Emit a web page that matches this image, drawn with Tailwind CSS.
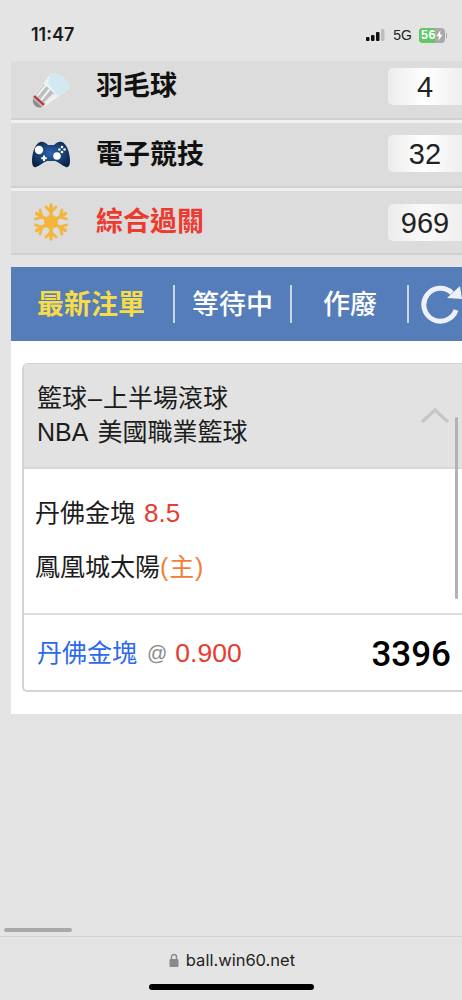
<!doctype html>
<html lang="zh-Hant"><head><meta charset="utf-8">
<script src="https://cdn.jsdelivr.net/npm/@tailwindcss/browser@4"></script>
</head>
<body class="m-0 bg-[#e4e4e4]">
<div class="relative w-[462px] h-[1000px] overflow-hidden flex flex-col bg-[#e4e4e4] text-black font-['Liberation_Sans','Noto_Sans_CJK_TC',sans-serif]">
  <!-- status bar -->
  <div class="h-[61px] shrink-0 flex items-start pt-[24px] pl-[31px] pr-[15px]">
    <span class="text-[18px] leading-[22px] font-semibold text-[#1a1a1a] font-['Inter','Liberation_Sans',sans-serif]">11:47</span>
    <div class="ml-auto flex items-center h-[20px] mt-px">
      <svg width="20" height="14" viewBox="0 0 20 14"><rect x="0" y="9" width="3.5" height="4" rx="1" fill="#111"/><rect x="5" y="7" width="3.5" height="6" rx="1" fill="#111"/><rect x="10" y="4" width="3.5" height="9" rx="1" fill="#111"/><rect x="15" y="1" width="3.5" height="12" rx="1" fill="#bdbdbd"/></svg>
      <span class="ml-[7px] text-[14px] leading-[20px] text-[#222]">5G</span>
      <div class="ml-[7px] relative w-[26px] h-[15px] rounded-[4px] overflow-hidden bg-[#a9a9a9]">
        <div class="absolute left-0 top-0 bottom-0 w-[16px] bg-[#62c866]"></div>
        <span class="absolute left-[2px] top-0 text-[12.5px] leading-[15px] font-bold text-white tracking-[0.5px]">56</span>
        <svg class="absolute right-[2px] top-[2px]" width="7" height="11" viewBox="0 0 7 11"><path d="M4.5 0 0.5 6.2H3L2.3 11 6.5 4.6H4Z" fill="#fff"/></svg>
      </div>
      <div class="w-[1px] h-[5px] bg-[#aaa] ml-px"></div>
    </div>
  </div>

  <div class="ml-[11px] flex flex-col">
    <!-- sport rows -->
    <div class="h-[59px] flex items-center bg-[#dcdcdc] border-b-2 border-[#d0d0d0]">
      <div class="w-[85px] flex justify-start pl-[20px] shrink-0">
        <svg width="40" height="38" viewBox="0 0 40 38">
          <path d="M3 25 20 2C28 1 36 8 39 17L13 36Z" fill="#eaf3f7"/>
          <path d="M20 2C28 1 36 8 39 17L27 25 17 12Z" fill="#d3e8f0"/>
          <path d="M2 27 13 13 24 23 11 36C6 37 1 33 2 27Z" fill="#bdbdbd"/>
          <path d="M6 25 15 14M10 29 19 18M14 32 23 23" stroke="#f0f0f0" stroke-width="2"/>
          <path d="M3 25 13 34" stroke="#b8343a" stroke-width="2.2"/>
          <path d="M2 28 11 36C6 38 1 34 2 28Z" fill="#8c8c8c"/>
        </svg>
      </div>
      <span class="text-[27px] leading-[34px] font-bold text-[#111] -mt-[8px]">羽毛球</span>
      <div class="ml-auto w-[74px] h-[37px] -mt-[6px] rounded-l-[5px] bg-gradient-to-r from-[#ececec] via-white to-[#eeeeee] text-center text-[29px] leading-[38px] text-[#222]">4</div>
    </div>
    <div class="h-[3px] bg-[#f0f0f0]"></div>
    <div class="h-[65px] flex items-center bg-[#dcdcdc] border-b-2 border-[#d0d0d0]">
      <div class="w-[85px] flex pl-[20px] shrink-0">
        <svg width="40" height="27" viewBox="0 0 40 27">
          <defs><radialGradient id="pad" cx="50%" cy="45%" r="60%"><stop offset="0" stop-color="#2c67b4"/><stop offset="1" stop-color="#0b2344"/></radialGradient></defs>
          <path d="M9 1C12 0 15 2 17 4H23C25 2 28 0 31 1 36 3 39 12 39 20 39 25 37 27 35 26 31 25 28 21 24 20H16C12 21 9 25 5 26 3 27 1 25 1 20 1 12 4 3 9 1Z" fill="url(#pad)"/>
          <circle cx="8" cy="9" r="4.2" fill="#fff"/><circle cx="26" cy="15" r="3.8" fill="#fff"/>
          <path d="M13 14.5V20M10.2 17.2H15.8" stroke="#fff" stroke-width="2"/>
          <circle cx="31" cy="6" r="1.3" fill="#fff"/><circle cx="31" cy="11" r="1.3" fill="#fff"/><circle cx="28.4" cy="8.5" r="1.3" fill="#fff"/><circle cx="33.6" cy="8.5" r="1.3" fill="#fff"/>
        </svg>
      </div>
      <span class="text-[27px] leading-[34px] font-bold text-[#111]">電子競技</span>
      <div class="ml-auto w-[74px] h-[37px] -mt-[2px] rounded-l-[5px] bg-gradient-to-r from-[#ececec] via-white to-[#eeeeee] text-center text-[29px] leading-[38px] text-[#222]">32</div>
    </div>
    <div class="h-[3px] bg-[#f0f0f0]"></div>
    <div class="h-[64px] flex items-center bg-[#dcdcdc] border-b-2 border-[#d0d0d0]">
      <div class="w-[85px] flex pl-[22px] shrink-0">
        <svg width="36" height="38" viewBox="0 0 36 38" fill="none" stroke="#f3b53c" stroke-width="3.4" stroke-linecap="round">
          <path d="M18 2V36M3.5 10.5 32.5 27.5M32.5 10.5 3.5 27.5"/>
          <path d="M13 4 18 9 23 4M13 34 18 29 23 34M2.5 16 9 14 7 7M33.5 16 27 14 29 7M2.5 22 9 24 7 31M33.5 22 27 24 29 31" stroke-width="2.8"/>
          <circle cx="18" cy="19" r="5" stroke-width="4"/>
        </svg>
      </div>
      <span class="text-[27px] leading-[34px] font-bold text-[#ec3a2f]">綜合過關</span>
      <div class="ml-auto w-[74px] h-[37px] rounded-l-[5px] bg-gradient-to-r from-[#ececec] via-[#fafafa] to-[#eeeeee] text-center text-[29px] leading-[38px] text-[#222]">969</div>
    </div>

    <!-- tabs -->
    <div class="mt-[12px] h-[74px] bg-[#547db9] flex items-center text-[27px] leading-[34px] overflow-hidden whitespace-nowrap">
      <span class="ml-[26px] mt-[2px] shrink-0 font-bold text-[#f6dc4a]">最新注單</span>
      <div class="ml-[28px] shrink-0 w-[2px] h-[38px] bg-[#c9d3e2]"></div>
      <span class="ml-[17px] mt-[2px] shrink-0 font-medium text-white">等待中</span>
      <div class="ml-[17px] shrink-0 w-[2px] h-[38px] bg-[#c9d3e2]"></div>
      <span class="ml-[31px] mt-[2px] shrink-0 font-medium text-white">作廢</span>
      <div class="ml-[30px] shrink-0 w-[2px] h-[38px] bg-[#c9d3e2]"></div>
      <svg class="ml-[11px] shrink-0" width="44" height="42" viewBox="0 0 44 42" fill="none">
        <path d="M32 10A16.5 16.5 0 1 0 36 27" stroke="#eef2f8" stroke-width="5"/>
        <path d="M27 15 42 16 40 3Z" fill="#eef2f8"/>
      </svg>
    </div>

    <!-- panel -->
    <div class="h-[373px] bg-white pt-[22px] pl-[11px]">
      <div class="h-[329px] rounded-tl-[6px] rounded-bl-[5px] border-l-2 border-b-2 border-t border-[#d4d4d4] flex flex-col bg-white overflow-hidden">
        <div class="h-[105px] shrink-0 bg-[#e2e2e2] border-b-2 border-[#d9d9d9] pt-[17px] pl-[13px] text-[25px] leading-[34px] text-[#1c1c1c] relative">
          <div>籃球<span class="inline-block w-[16px] text-center">–</span>上半場滾球</div>
          <div>NBA<span class="inline-block w-[9px]"></span>美國職業籃球</div>
          <svg class="absolute left-[396px] top-[43px]" width="30" height="18" viewBox="0 0 30 18" fill="none"><path d="M2 15 15 3 28 15" stroke="#c6c6c6" stroke-width="3.2"/></svg>
        </div>
        <div class="h-[146px] shrink-0 border-b-2 border-[#dddddd] pl-[11px] pt-[27px] text-[25px] leading-[34px] text-[#1c1c1c]">
          <div>丹佛金塊 <span class="text-[#e83b2e] text-[26px] ml-[2px]">8.5</span></div>
          <div class="mt-[20px]">鳳凰城太陽<span class="text-[#f07f33] tracking-[0.8px]">(主)</span></div>
        </div>
        <div class="flex-1 flex items-center pl-[13px] pr-[11px] pt-[4px]">
          <span class="text-[25px] leading-[34px] text-[#2c68ee] -mt-[4px]">丹佛金塊</span>
          <span class="ml-[10px] -mt-[4px] text-[20px] text-[#8a8a8a]">@</span>
          <span class="ml-[8px] -mt-[4px] text-[26.5px] leading-[34px] text-[#e83b2e]">0.900</span>
          <span class="ml-auto text-[35px] leading-[40px] font-medium font-['Roboto','Liberation_Sans',sans-serif]">3396</span>
        </div>
      </div>
    </div>
  </div>

  <!-- vertical scroll indicator -->
  <div class="absolute left-[455px] top-[417px] w-[3px] h-[182px] rounded-full bg-[#b2b2b2]"></div>

  <!-- browser bottom bar -->
  <div class="mt-auto h-[64px] shrink-0 border-t border-[#d3d3d3] relative">
    <div class="absolute -top-[9px] left-[4px] w-[68px] h-[4px] rounded-full bg-[#a9a9a9]"></div>
    <div class="flex items-center justify-center pt-[13px] pl-[2px]">
      <svg width="10" height="14" viewBox="0 0 10 14"><path d="M2.5 6.5V4a2.5 2.5 0 0 1 5 0V6.5" fill="none" stroke="#8a8a8a" stroke-width="1.4"/><rect x="0.5" y="6" width="9" height="8" rx="1.2" fill="#8a8a8a"/></svg>
      <span class="ml-[7px] text-[16.5px] leading-[20px] text-[#222] font-['Inter','Liberation_Sans',sans-serif]">ball.win60.net</span>
    </div>
    <div class="absolute left-[149px] top-[47px] w-[165px] h-[6px] rounded-full bg-black"></div>
  </div>
</div>
</body></html>
